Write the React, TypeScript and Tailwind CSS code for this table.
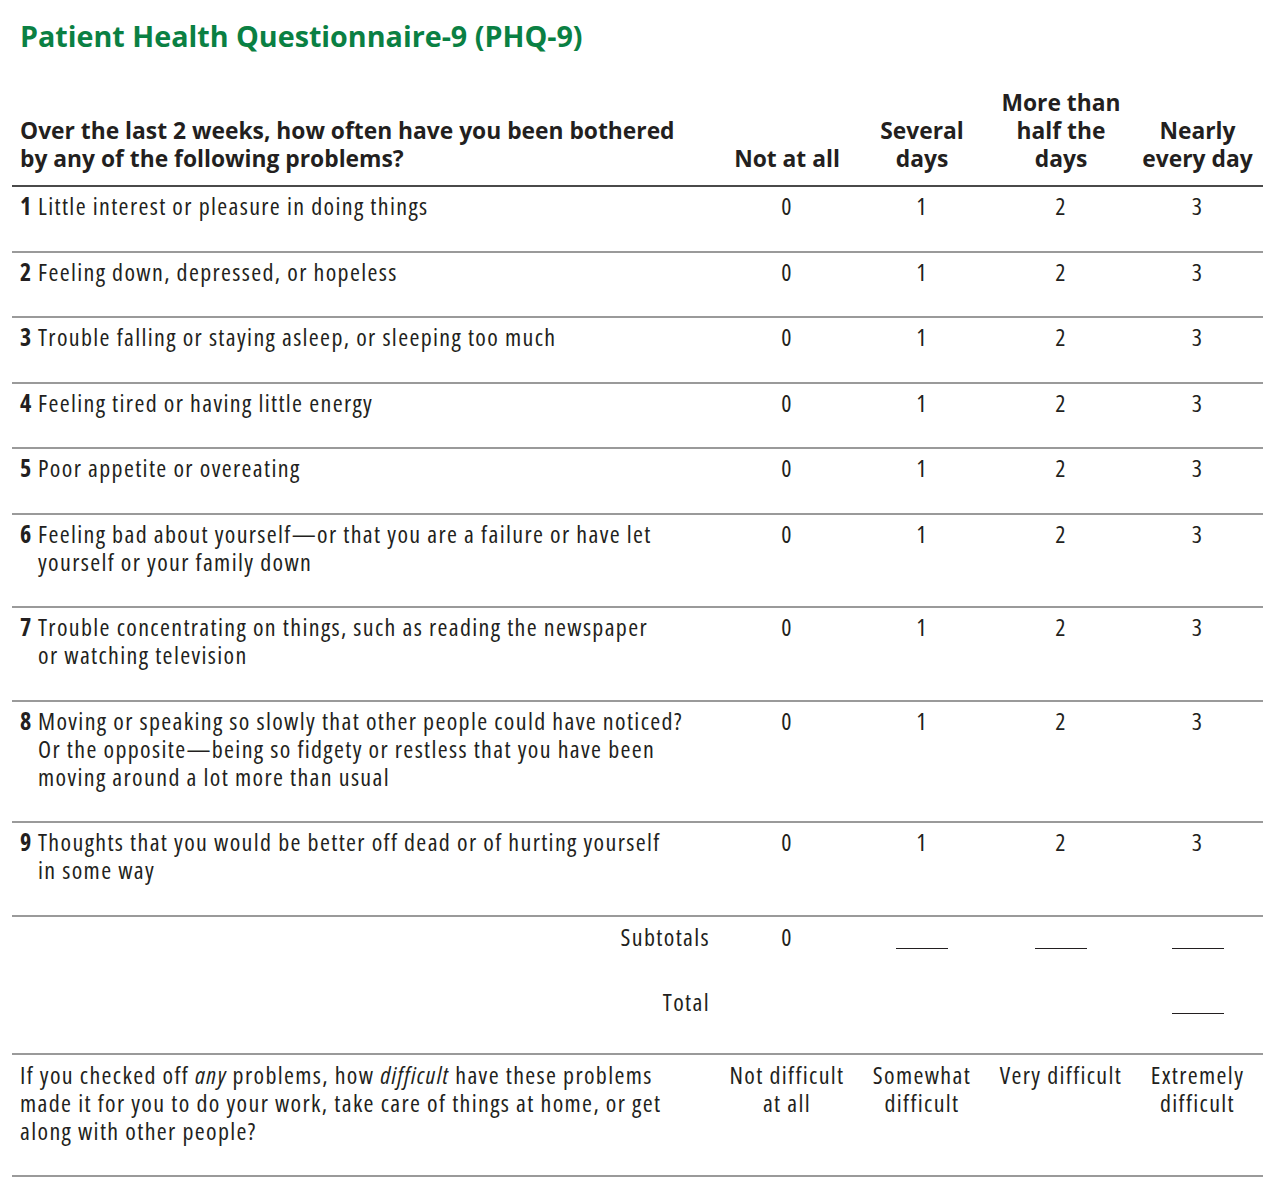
import React from 'react';

const items = [
  ['Little interest or pleasure in doing things'],
  ['Feeling down, depressed, or hopeless'],
  ['Trouble falling or staying asleep, or sleeping too much'],
  ['Feeling tired or having little energy'],
  ['Poor appetite or overeating'],
  ['Feeling bad about yourself—or that you are a failure or have let', 'yourself or your family down'],
  ['Trouble concentrating on things, such as reading the newspaper', 'or watching television'],
  [
    'Moving or speaking so slowly that other people could have noticed?',
    'Or the opposite—being so fidgety or restless that you have been',
    'moving around a lot more than usual',
  ],
  ['Thoughts that you would be better off dead or of hurting yourself', 'in some way'],
];

const cols = 'grid grid-cols-[708px_134px_136px_142px_131px]';

function Blank() {
  return <span className="inline-block w-[52px] border-b border-[#231f20] translate-y-[3px]" />;
}

export default function App() {
  return (
    <div
      className="w-[1280px] min-h-[1185px] bg-white text-[#231f20] pl-[12px] pr-[17px] pt-[18px] whitespace-nowrap"
      style={{ fontFamily: '"Open Sans", "DejaVu Sans Condensed", sans-serif', fontStretch: '75%' }}
    >
      <h1 className="pl-[8px] text-[28.7px] leading-[36px] font-bold text-[#0a8043] [font-stretch:100%]">
        Patient Health Questionnaire-9 (PHQ-9)
      </h1>

      {/* Header */}
      <div
        className={`${cols} mt-[35px] pb-[12px] border-b-2 border-[#4a4a4a] font-bold text-[22.8px] leading-[28px] items-end [font-stretch:100%]`}
      >
        <div className="pl-[8px]">
          Over the last 2 weeks, how often have you been bothered
          <br />
          by any of the following problems?
        </div>
        <div className="text-center">Not at all</div>
        <div className="text-center">
          Several
          <br />
          days
        </div>
        <div className="text-center">
          More than
          <br />
          half the
          <br />
          days
        </div>
        <div className="text-center">
          Nearly
          <br />
          every day
        </div>
      </div>

      {/* Items */}
      {items.map((lines, i) => (
        <div
          key={i}
          className={`${cols} pt-[5px] pb-[30.5px] border-b-2 border-[#9a9a9a] text-[24px] leading-[28px] tracking-[1.35px]`}
        >
          <div className="pl-[8px] flex">
            <span className="font-bold w-[18px] shrink-0 tracking-normal">{i + 1}</span>
            <div>
              {lines.map((l, j) => (
                <div key={j}>{l}</div>
              ))}
            </div>
          </div>
          <div className="text-center">0</div>
          <div className="text-center">1</div>
          <div className="text-center">2</div>
          <div className="text-center">3</div>
        </div>
      ))}

      {/* Totals */}
      <div className="pt-[6px] pb-[37px] border-b-2 border-[#9a9a9a] text-[24px] leading-[28px] tracking-[1.35px]">
        <div className={`${cols} h-[65px]`}>
          <div className="text-right pr-[10px]">Subtotals</div>
          <div className="text-center">0</div>
          <div className="text-center"><Blank /></div>
          <div className="text-center"><Blank /></div>
          <div className="text-center"><Blank /></div>
        </div>
        <div className={`${cols} h-[28px]`}>
          <div className="text-right pr-[10px]">Total</div>
          <div />
          <div />
          <div />
          <div className="text-center"><Blank /></div>
        </div>
      </div>

      {/* Difficulty */}
      <div
        className={`${cols} pt-[6px] pb-[30px] border-b-2 border-[#9a9a9a] text-[24px] leading-[28px] tracking-[1.35px]`}
      >
        <div className="pl-[8px]">
          If you checked off <i>any</i> problems, how <i>difficult</i> have these problems
          <br />
          made it for you to do your work, take care of things at home, or get
          <br />
          along with other people?
        </div>
        <div className="text-center">
          Not difficult
          <br />
          at all
        </div>
        <div className="text-center">
          Somewhat
          <br />
          difficult
        </div>
        <div className="text-center">Very difficult</div>
        <div className="text-center">
          Extremely
          <br />
          difficult
        </div>
      </div>
    </div>
  );
}
